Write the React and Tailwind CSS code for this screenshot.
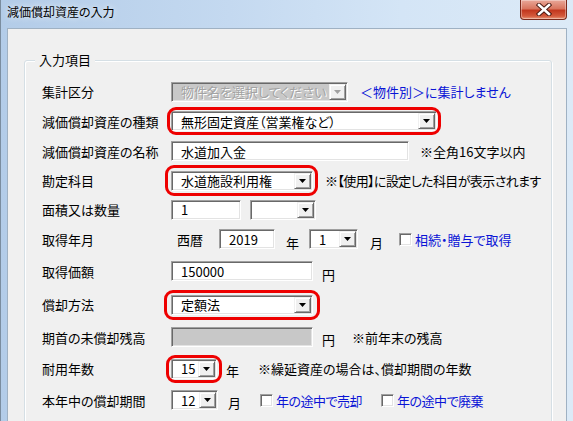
import React from 'react'

const Arrow = ({ disabled }) => (
  <svg width="7" height="4" viewBox="0 0 7 4">
    <path d="M0 0h7L3.5 4z" fill={disabled ? '#a0a0a0' : '#000000'} />
  </svg>
)

const DropButton = ({ disabled }) => (
  <div className="w-[17px] h-full shrink-0 flex items-center justify-center bg-[#f0f0f0] border border-t-[#f0f0f0] border-l-[#f0f0f0] border-b-[#696969] border-r-[#696969] shadow-[inset_1px_1px_0_#ffffff,inset_-1px_-1px_0_#a0a0a0]">
    <Arrow disabled={disabled} />
  </div>
)

const sunken = 'border border-t-[#a0a0a0] border-l-[#a0a0a0] border-b-white border-r-white shadow-[inset_1px_1px_0_#696969,inset_-1px_-1px_0_#e3e3e3] p-[1px]'

const Combo = ({ w, value, disabled }) => (
  <div className={`${sunken} ${w} h-[20px] flex ${disabled ? 'bg-[#c8c8c8]' : 'bg-white'}`}>
    <div className={`flex-1 flex items-center pl-[8px] leading-none whitespace-nowrap overflow-hidden ${disabled ? 'text-[#a3a3a3] [text-shadow:1px_1px_0_#ffffff]' : 'text-black'}`}>
      {value}
    </div>
    <DropButton disabled={disabled} />
  </div>
)

const Input = ({ w, value, disabled }) => (
  <div className={`${sunken} ${w} h-[20px] flex items-center pl-[9px] leading-none ${disabled ? 'bg-[#c8c8c8]' : 'bg-white'}`}>
    {value}
  </div>
)

const Check = ({ className }) => (
  <div className={`w-[13px] h-[13px] shrink-0 bg-white border border-t-[#a0a0a0] border-l-[#a0a0a0] border-b-white border-r-white shadow-[inset_1px_1px_0_#696969,inset_-1px_-1px_0_#e3e3e3] ${className}`} />
)

const Ring = ({ className, children }) => (
  <div className="relative">
    {children}
    <div className={`absolute border-[3px] border-[#ee0000] rounded-[9px] pointer-events-none ${className}`} />
  </div>
)

const Row = ({ label, h, children }) => (
  <div className={`flex items-center ${h}`}>
    <div className="w-[129px] shrink-0 leading-none">{label}</div>
    <div className="flex items-center whitespace-nowrap">{children}</div>
  </div>
)

const CloseButton = () => (
  <div className="w-[47px] h-[20px] rounded-b-[4px] border border-t-0 border-[#7a2a1c] bg-[linear-gradient(180deg,#e9a899_0%,#d9765f_45%,#c2381f_55%,#d45a3c_85%,#e89a7c_100%)] shadow-[inset_0_0_0_1px_rgba(255,255,255,0.35)] flex items-center justify-center">
    <svg width="16" height="13" viewBox="0 0 16 13">
      <path d="M3 2l10 9M13 2L3 11" stroke="#4a1a12" strokeWidth="4.5" strokeLinecap="square" />
      <path d="M3 2l10 9M13 2L3 11" stroke="#ffffff" strokeWidth="2.6" strokeLinecap="square" />
    </svg>
  </div>
)

export default function App() {
  return (
    <div className="w-[573px] h-[421px] overflow-hidden flex flex-col border-l border-[#7b8d9f] bg-[linear-gradient(90deg,#b3cce8_0%,#c4d9f0_40%,#d4e5f6_70%,#dceaf7_100%)] text-[13px] text-black font-['Noto_Sans_CJK_JP','Noto_Sans',sans-serif] [font-feature-settings:'palt']">
      <div className="h-[28px] shrink-0 flex items-start justify-between">
        <div className="pl-[6px] pt-[6px] text-[12px] leading-none [text-shadow:0_0_6px_#ffffff]">減価償却資産の入力</div>
        <div className="mr-[6px]">
          <CloseButton />
        </div>
      </div>
      <div className="flex-1 mx-[6px] border border-[#9fb1c3] bg-[#f0f0f0] flex flex-col">
        <div className="relative mt-[31px] ml-[16px] mr-[14px] h-[400px] border border-[#d5dfe5] rounded-[3px] shadow-[1px_1px_0_#ffffff,inset_1px_1px_0_#ffffff] pt-[16px] pl-[17px]">
          <div className="absolute left-[10px] -top-[8px] px-[4px] bg-[#f0f0f0] leading-none">入力項目</div>

          <Row label="集計区分" h="h-[29px]">
            <Combo w="w-[177px]" value="物件名を選択してください" disabled />
            <span className="ml-[12px] text-[#0a14d6] leading-none">＜物件別＞に集計しません</span>
          </Row>

          <Row label="減価償却資産の種類" h="h-[30px]">
            <Ring className="-left-[4px] -right-[4px] -top-[4px] -bottom-[4px]">
              <Combo w="w-[266px]" value="無形固定資産（営業権など）" />
            </Ring>
          </Row>

          <Row label="減価償却資産の名称" h="h-[30px]">
            <Input w="w-[238px]" value="水道加入金" />
            <span className="ml-[11px] leading-none">※全角16文字以内</span>
          </Row>

          <Row label="勘定科目" h="h-[29px]">
            <Ring className="-left-[6px] -right-[5px] -top-[6px] -bottom-[5px]">
              <Combo w="w-[142px]" value="水道施設利用権" />
            </Ring>
            <span className="ml-[12px] leading-none tracking-[-0.6px]">※【使用】に設定した科目が表示されます</span>
          </Row>

          <Row label="面積又は数量" h="h-[29px]">
            <Input w="w-[70px]" value="1" />
            <div className="ml-[9px]">
              <Combo w="w-[66px]" value="" />
            </div>
          </Row>

          <Row label="取得年月" h="h-[30px]">
            <span className="ml-[6px] leading-none">西暦</span>
            <div className="ml-[16px]">
              <Input w="w-[56px]" value="2019" />
            </div>
            <span className="ml-[11px] mt-[6px] leading-none">年</span>
            <div className="ml-[10px]">
              <Combo w="w-[49px]" value="1" />
            </div>
            <span className="ml-[12px] mt-[6px] leading-none">月</span>
            <Check className="ml-[16px]" />
            <span className="ml-[3px] text-[#0a14d6] leading-none">相続・贈与で取得</span>
          </Row>

          <Row label="取得価額" h="h-[34px]">
            <Input w="w-[142px]" value="150000" />
            <span className="ml-[9px] mt-[6px] leading-none">円</span>
          </Row>

          <Row label="償却方法" h="h-[33px]">
            <Ring className="-left-[7px] -right-[7px] -top-[5px] -bottom-[5px]">
              <Combo w="w-[142px]" value="定額法" />
            </Ring>
          </Row>

          <Row label="期首の未償却残高" h="h-[32px]">
            <Input w="w-[142px]" value="" disabled />
            <span className="ml-[9px] mt-[4px] leading-none">円</span>
            <span className="ml-[17px] leading-none">※前年末の残高</span>
          </Row>

          <Row label="耐用年数" h="h-[31px]">
            <Ring className="-left-[5px] -right-[5px] -top-[4px] -bottom-[4px]">
              <Combo w="w-[46px]" value="15" />
            </Ring>
            <span className="ml-[9px] mt-[4px] leading-none">年</span>
            <span className="ml-[19px] leading-none">※繰延資産の場合は、償却期間の年数</span>
          </Row>

          <Row label="本年中の償却期間" h="h-[32px]">
            <Combo w="w-[47px]" value="12" />
            <span className="ml-[10px] mt-[4px] leading-none">月</span>
            <Check className="ml-[19px]" />
            <span className="ml-[3px] text-[#0a14d6] leading-none tracking-[-0.5px]">年の途中で売却</span>
            <Check className="ml-[19px]" />
            <span className="ml-[3px] text-[#0a14d6] leading-none tracking-[-0.5px]">年の途中で廃棄</span>
          </Row>
        </div>
      </div>
    </div>
  )
}
